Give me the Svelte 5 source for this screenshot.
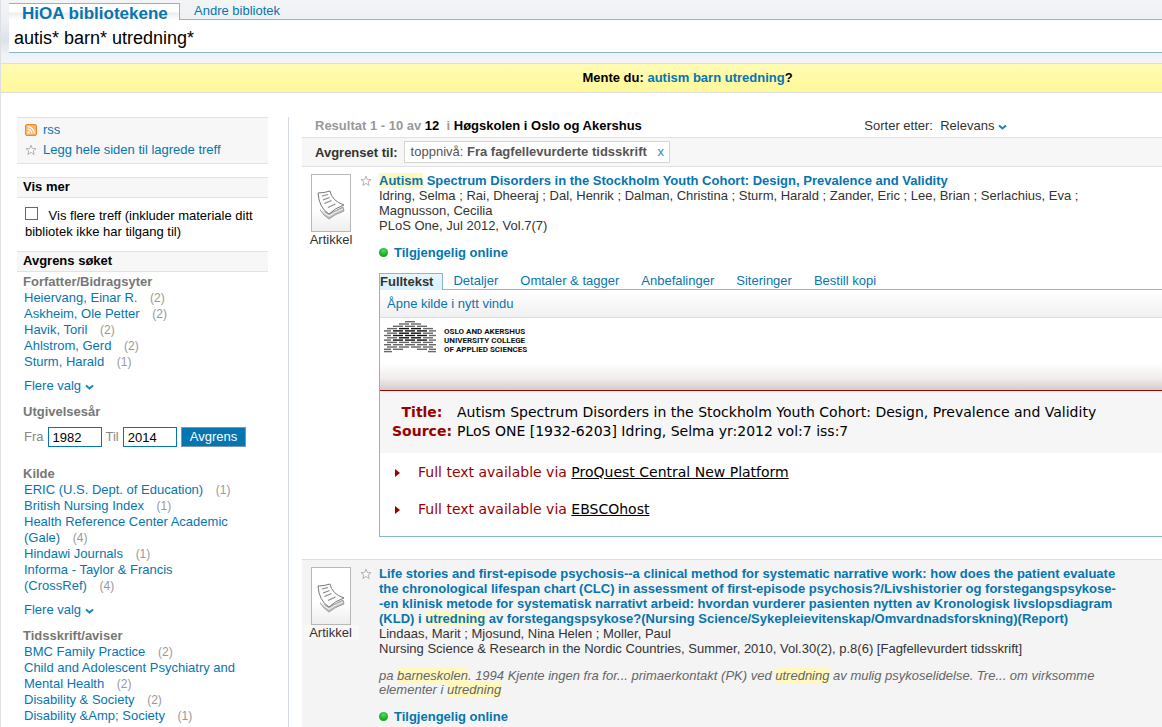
<script>
    let query = "autis* barn* utredning*";
    let includeAll = false;
    let fromYear = "1982";
    let toYear = "2014";

    const authors = [
        { name: "Heiervang, Einar R.", count: 2 },
        { name: "Askheim, Ole Petter", count: 2 },
        { name: "Havik, Toril", count: 2 },
        { name: "Ahlstrom, Gerd", count: 2 },
        { name: "Sturm, Harald", count: 1 }
    ];

    const sources = [
        { name: "ERIC (U.S. Dept. of Education)", count: 1 },
        { name: "British Nursing Index", count: 1 },
        { name: "Health Reference Center Academic (Gale)", count: 4 },
        { name: "Hindawi Journals", count: 1 },
        { name: "Informa - Taylor & Francis (CrossRef)", count: 4 }
    ];

    const journals = [
        { name: "BMC Family Practice", count: 2 },
        { name: "Child and Adolescent Psychiatry and Mental Health", count: 2 },
        { name: "Disability & Society", count: 2 },
        { name: "Disability &Amp; Society", count: 1 }
    ];

    const tabs = ["Fulltekst", "Detaljer", "Omtaler & tagger", "Anbefalinger", "Siteringer", "Bestill kopi"];
    let activeTab = "Fulltekst";

    // brick rows of the college logo, top to bottom: left edge of each brick
    const bricks = [
        [21],
        [15, 27],
        [9, 21, 33],
        [3, 15, 27, 39],
        [-3, 9, 21, 33, 45],
        [3, 15, 27, 39],
        [-3, 9, 21, 33, 45],
        [3, 15, 27, 39],
        [-3, 9, 21, 33, 45],
        [3, 15, 27, 39],
        [-3, 9, 21, 33, 45],
        [3, 15, 27, 39],
        [-3, 9, 33, 45],
        [-2, 44]
    ];

    function brickColor(row, x) {
        return row > 2 && row < 9 && x > 8 && x < 34 ? "#111" : "#666";
    }
</script>

<style>
    :global(body) {
        margin: 0;
        background: #fff;
    }

    .page {
        min-height: 100vh;
        box-sizing: border-box;
        border-left: 1px solid #dedfe3;
        display: flex;
        flex-direction: column;
        font-family: "Liberation Sans", Arial, sans-serif;
        font-size: 13px;
        line-height: 15px;
        color: #333;
    }

    a {
        color: #0675b0;
        text-decoration: none;
    }

    ul {
        list-style: none;
        margin: 0;
        padding: 0;
    }

    h1, h2, h3, p {
        margin: 0;
        font-size: 13px;
    }

    mark {
        background: #fff9c0;
        color: inherit;
    }

    button {
        font: inherit;
        cursor: pointer;
    }

    header {
        padding: 3px 0 10px 8px;
        background: linear-gradient(#f2f4f6, #eef1f4 20px, #dce2e9 40px, #eef1f5 54px, #f3f5f7);
    }

    .library-tabs {
        display: flex;
    }

    .library-tabs a {
        box-sizing: border-box;
        height: 17px;
        padding-left: 14px;
        border-bottom: 1px solid #8ab6d0;
    }

    .library-tabs .current {
        width: 171px;
        padding-left: 13px;
        border: 1px solid #8ab6d0;
        border-width: 1px 1px 0 0;
        background: linear-gradient(#fff 8px, #ececec 9px, #fff);
        font-size: 17px;
        font-weight: bold;
        line-height: 20px;
    }

    .library-tabs .other {
        flex: 1;
    }

    .query {
        display: block;
        box-sizing: border-box;
        width: 100%;
        height: 33px;
        padding: 4px 5px 0;
        border: 0;
        border-bottom: 1px solid #8ab6d0;
        background: #fff;
        color: #000;
        font-family: inherit;
        font-size: 18px;
        outline: none;
    }

    .suggestion {
        padding: 6px 0 7px 212px;
        border: 1px solid #dedfe0;
        border-width: 1px 0;
        background: linear-gradient(#fffbb3, #fff89a);
        color: #000;
        font-weight: bold;
        text-align: center;
    }

    .columns {
        flex: 1;
        display: flex;
        padding-top: 24px;
    }

    aside {
        flex: none;
        width: 251px;
        padding: 0 20px 0 16px;
        border-right: 1px solid #d4dae2;
        line-height: 16px;
    }

    .tools {
        padding: 2px 8px 3px;
        border: 1px solid #e2e2e2;
        border-width: 1px 0;
        background: #f7f7f7;
        line-height: 20px;
    }

    .tools li {
        display: flex;
        align-items: center;
        gap: 6px;
    }

    .bar {
        margin-top: 13px;
        padding: 1px 6px 2px;
        border: 1px solid #e2e2e2;
        border-width: 1px 0;
        background: #f7f7f7;
        color: #000;
    }

    .expand {
        display: block;
        margin: 9px 8px 11px;
        color: #000;
    }

    .expand input {
        appearance: none;
        width: 13px;
        height: 13px;
        margin: 0 7px 0 0;
        border: 1px solid #666;
        background: #fff;
    }

    .expand input:checked {
        background: #0675b0;
    }

    .bar.refine {
        margin-top: 0;
    }

    .facet {
        padding: 2px 0 0 7px;
    }

    .facet h3 {
        margin-left: -1px;
        color: #777;
    }

    .facet li {
        padding-right: 32px;
    }

    .count {
        margin-left: 9px;
        color: #999;
        font-size: 12px;
    }

    .more {
        display: inline-block;
        margin: 8px 0;
    }

    .years {
        display: flex;
        align-items: center;
        gap: 4px;
        margin: 7px 0 17px;
        color: #888;
    }

    .years input {
        box-sizing: border-box;
        width: 54px;
        height: 20px;
        padding: 0 4px;
        border: 1px solid #0675b0;
        color: #000;
        font: inherit;
    }

    .years button {
        height: 20px;
        padding: 0 8px;
        border: 1px solid #7897bb;
        background: #0675b0;
        color: #fff;
        line-height: 16px;
    }

    main {
        flex: 1;
        min-width: 0;
        padding-left: 13px;
        display: flex;
        flex-direction: column;
    }

    .summary {
        display: flex;
        justify-content: space-between;
        padding: 1px 155px 4px 13px;
    }

    .summary h2 {
        color: #999;
    }

    .summary b {
        color: #000;
    }

    .sort {
        border: 0;
        padding: 0;
        background: none;
        color: #333;
    }

    .filters {
        display: flex;
        align-items: center;
        gap: 6px;
        padding: 3px 13px;
        border: 1px solid #e2e2e2;
        border-width: 1px 0;
        background: #f7f7f7;
    }

    .filter {
        padding: 2px 5px 3px 6px;
        border: 1px solid #d5d5d5;
        background: #fff;
        color: #555;
    }

    .filter button {
        margin-left: 7px;
        padding: 0;
        border: 0;
        background: none;
        color: #2a8dc5;
    }

    .result {
        display: flex;
        padding-top: 6px;
    }

    .kind {
        flex: none;
        width: 58px;
        padding-top: 1px;
        text-align: center;
    }

    .kind span {
        display: block;
    }

    .kind svg {
        display: block;
        margin: 0 auto;
        border: 1px solid #b8b8b8;
        background: linear-gradient(#fff 60%, #eee);
    }

    .star {
        flex: none;
        margin: 2px 7px 0 0;
    }

    .details {
        flex: 1;
        min-width: 0;
    }

    .text {
        padding-right: 43px;
    }

    .online {
        display: flex;
        align-items: center;
        gap: 6px;
        margin-top: 12px;
        font-weight: bold;
    }

    .dot {
        width: 9px;
        height: 9px;
        border-radius: 50%;
        background: radial-gradient(circle at 50% 30%, #55da62, #16ad25 60%, #0f981c);
    }

    .result-tabs {
        display: flex;
        margin-top: 13px;
        border-bottom: 1px solid #8ab6d0;
    }

    .result-tabs button {
        margin: 0 22px 0 0;
        padding: 0 0 1px;
        border: 0;
        background: none;
        color: #0675b0;
    }

    .result-tabs .active {
        margin: 0 10px -1px 0;
        padding: 0 9px 1px 0;
        border: 1px solid #8ab6d0;
        border-bottom: 0;
        background: linear-gradient(#e8f6fd, #d8f0fc);
        color: #333;
        font-weight: bold;
    }

    .panel {
        border: 1px solid #8ab6d0;
        border-width: 0 0 1px 1px;
    }

    .open {
        padding: 6px 7px;
        border-bottom: 1px solid #ddd;
        background: linear-gradient(#fff, #f0f0f0);
    }

    .banner {
        display: flex;
        align-items: flex-start;
        gap: 8px;
        height: 69px;
        padding: 3px 4px 0;
        border-bottom: 1px solid #900;
        background: linear-gradient(#fff 44px, #f3eded 60px, #d5caca);
    }

    .banner p {
        padding-top: 6px;
        color: #111;
        font-family: Roboto, sans-serif;
        font-size: 8px;
        font-weight: bold;
        line-height: 9px;
    }

    .verdana {
        font-family: "DejaVu Sans", Verdana, sans-serif;
        font-size: 14px;
        line-height: 19px;
    }

    .record {
        padding: 12px;
        background: #f6f6f6;
        color: #000;
    }

    .record table {
        border-collapse: collapse;
    }

    .record th {
        min-width: 60px;
        padding: 0 5px 0 0;
        color: #900;
    }

    .record td {
        padding: 0;
    }

    .targets {
        display: flex;
        flex-direction: column;
        gap: 18px;
        padding: 10px 15px 17px;
        color: #900;
    }

    .targets li {
        display: flex;
        align-items: center;
        gap: 18px;
    }

    .targets a {
        color: #000;
        text-decoration: underline;
    }

    .shaded {
        flex: 1;
        margin-top: 22px;
        border-top: 1px solid #ddd;
        background: #f4f4f4;
    }

    .shaded .kind span {
        margin-right: 1px;
        background: #f8f8f8;
    }

    .snippet {
        margin-top: 13px;
        color: #666;
        font-style: italic;
        line-height: 14px;
    }
</style>

{#snippet chevron()}
    <svg width="9" height="6" viewBox="0 0 9 6" aria-hidden="true">
        <path d="M1 1.5 4.5 4.5 8 1.5" fill="none" stroke="#1683bd" stroke-width="2" />
    </svg>
{/snippet}

{#snippet starIcon()}
    <svg width="12" height="12" viewBox="0 0 12 12" aria-hidden="true">
        <path d="M6 1.2 7.3 4.6 11 4.7 8.1 6.9 9.2 10.5 6 8.4 2.8 10.5 3.9 6.9 1 4.7 4.7 4.6Z" fill="#fff" stroke="#aaa" stroke-width="0.9" />
    </svg>
{/snippet}

{#snippet articleIcon()}
    <svg width="38" height="56" viewBox="1 1 38 56" aria-hidden="true">
        <path d="M9 36Q13 42 18 45Q24 40 33 37L32 33 18 40Z" fill="#bdbdbd" stroke="#8c8c8c" stroke-width="0.8" />
        <path d="M10 36Q14 40 18 42Q24 38 32 35" fill="none" stroke="#eee" stroke-width="1.2" />
        <path d="M7 19Q13 19 19 17Q21 27 33 31Q24 34 18 40Q8 34 7 19Z" fill="#fcfcfc" stroke="#7a7a7a" />
        <path d="M11 22 17 20.500M12 26 18.500 23.500M13.500 29.500 20.500 26.500M17 33.500 24.500 30" stroke="#8a8a8a" stroke-width="1.200" />
    </svg>
{/snippet}

{#snippet facetList(items)}
    <ul>
        {#each items as item}
            <li><a href="#facet">{item.name}</a> <span class="count">({item.count})</span></li>
        {/each}
    </ul>
{/snippet}

<div class="page">
    <header>
        <nav class="library-tabs">
            <a class="current" href="#hioa">HiOA bibliotekene</a>
            <a class="other" href="#andre">Andre bibliotek</a>
        </nav>
        <input class="query" type="text" aria-label="Søk" bind:value={query} />
    </header>

    <p class="suggestion">Mente du: <a href="#suggestion">autism barn utredning</a>?</p>

    <div class="columns">
        <aside>
            <ul class="tools">
                <li>
                    <svg width="12" height="12" viewBox="0 0 12 12" aria-hidden="true">
                        <rect x="0.5" y="0.5" width="11" height="11" rx="1.5" fill="#f8b26b" stroke="#ee8a25" />
                        <circle cx="3.5" cy="8.5" r="1.2" fill="#fff" />
                        <path d="M2.5 5.2a4.3 4.3 0 0 1 4.3 4.3M2.5 2.7a6.8 6.8 0 0 1 6.8 6.8" fill="none" stroke="#fff" stroke-width="1.3" />
                    </svg>
                    <a href="#rss">rss</a>
                </li>
                <li>{@render starIcon()}<a href="#save">Legg hele siden til lagrede treff</a></li>
            </ul>

            <h2 class="bar">Vis mer</h2>
            <label class="expand">
                <input type="checkbox" bind:checked={includeAll} />
                Vis flere treff (inkluder materiale ditt bibliotek ikke har tilgang til)
            </label>

            <h2 class="bar refine">Avgrens søket</h2>
            <section class="facet">
                <h3>Forfatter/Bidragsyter</h3>
                {@render facetList(authors)}
                <a class="more" href="#authors">Flere valg {@render chevron()}</a>
            </section>
            <section class="facet">
                <h3>Utgivelsesår</h3>
                <form class="years" on:submit|preventDefault>
                    <label for="from">Fra</label>
                    <input id="from" type="text" bind:value={fromYear} />
                    <label for="to">Til</label>
                    <input id="to" type="text" bind:value={toYear} />
                    <button type="submit">Avgrens</button>
                </form>
            </section>
            <section class="facet">
                <h3>Kilde</h3>
                {@render facetList(sources)}
                <a class="more" href="#sources">Flere valg {@render chevron()}</a>
            </section>
            <section class="facet">
                <h3>Tidsskrift/aviser</h3>
                {@render facetList(journals)}
            </section>
        </aside>

        <main>
            <div class="summary">
                <h2>Resultat 1 - 10 av <b>12</b>&nbsp; i <b>Høgskolen i Oslo og Akershus</b></h2>
                <div>Sorter etter:&nbsp; <button class="sort">Relevans {@render chevron()}</button></div>
            </div>
            <div class="filters">
                <b>Avgrenset til:</b>
                <div class="filter">toppnivå: <b>Fra fagfellevurderte tidsskrift</b> <button aria-label="Fjern filter">x</button></div>
            </div>

            <article class="result">
                <div class="kind">{@render articleIcon()}<span>Artikkel</span></div>
                <div class="star">{@render starIcon()}</div>
                <div class="details">
                    <div class="text">
                        <h3><a href="#result-1"><mark>Autism</mark> Spectrum Disorders in the Stockholm Youth Cohort: Design, Prevalence and Validity</a></h3>
                        <p>Idring, Selma ; Rai, Dheeraj ; Dal, Henrik ; Dalman, Christina ; Sturm, Harald ; Zander, Eric ; Lee, Brian ; Serlachius, Eva ; Magnusson, Cecilia</p>
                        <p>PLoS One, Jul 2012, Vol.7(7)</p>
                        <div class="online"><span class="dot"></span><a href="#online-1">Tilgjengelig online</a></div>
                    </div>
                    <div class="result-tabs">
                        {#each tabs as tab}
                            <button class:active={tab === activeTab} on:click={() => activeTab = tab}>{tab}</button>
                        {/each}
                    </div>
                    <div class="panel">
                        <div class="open"><a href="#source">Åpne kilde i nytt vindu</a></div>
                        <div class="banner">
                            <svg width="52" height="32" viewBox="0 0 52 32" aria-hidden="true">
                                {#each bricks as row, i}
                                    {#each row as x}
                                        <rect {x} y={i * 2.3} width="10" height="1.4" fill={brickColor(i, x)} />
                                    {/each}
                                {/each}
                            </svg>
                            <p>OSLO AND AKERSHUS<br />UNIVERSITY COLLEGE<br />OF APPLIED SCIENCES</p>
                        </div>
                        <div class="record verdana">
                            <table>
                                <tbody>
                                    <tr><th>Title:</th><td>Autism Spectrum Disorders in the Stockholm Youth Cohort: Design, Prevalence and Validity</td></tr>
                                    <tr><th>Source:</th><td>PLoS ONE [1932-6203] Idring, Selma yr:2012 vol:7 iss:7</td></tr>
                                </tbody>
                            </table>
                        </div>
                        <ul class="targets verdana">
                            {#each ["ProQuest Central New Platform", "EBSCOhost"] as target}
                                <li>
                                    <svg width="5" height="8" viewBox="0 0 5 8" aria-hidden="true"><path d="M0 0 5 4 0 8Z" fill="#900" /></svg>
                                    <span>Full text available via <a href="#target">{target}</a></span>
                                </li>
                            {/each}
                        </ul>
                    </div>
                </div>
            </article>

            <article class="result shaded">
                <div class="kind">{@render articleIcon()}<span>Artikkel</span></div>
                <div class="star">{@render starIcon()}</div>
                <div class="details text">
                    <h3><a href="#result-2">Life stories and first-episode psychosis--a clinical method for systematic narrative work: how does the patient evaluate the chronological lifespan chart (CLC) in assessment of first-episode psychosis?/Livshistorier og forstegangspsykose-<wbr />-en klinisk metode for systematisk narrativt arbeid: hvordan vurderer pasienten nytten av Kronologisk livslopsdiagram (KLD) i <mark>utredning</mark> av forstegangspsykose?(Nursing Science/Sykepleievitenskap/Omvardnadsforskning)(Report)</a></h3>
                    <p>Lindaas, Marit ; Mjosund, Nina Helen ; Moller, Paul</p>
                    <p>Nursing Science &amp; Research in the Nordic Countries, Summer, 2010, Vol.30(2), p.8(6) [Fagfellevurdert tidsskrift]</p>
                    <p class="snippet">pa <mark>barneskolen</mark>. 1994 Kjente ingen fra for... primaerkontakt (PK) ved <mark>utredning</mark> av mulig psykoselidelse. Tre... om virksomme elementer i <mark>utredning</mark></p>
                    <div class="online"><span class="dot"></span><a href="#online-2">Tilgjengelig online</a></div>
                </div>
            </article>
        </main>
    </div>
</div>
